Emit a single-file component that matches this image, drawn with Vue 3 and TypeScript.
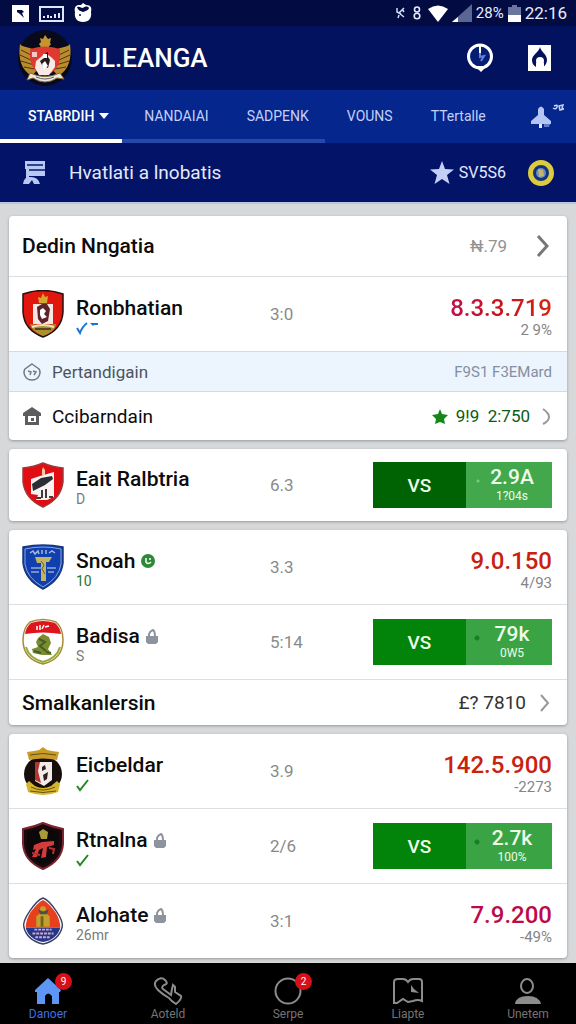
<script setup lang="ts">
interface Team {
  crest: string
  name: string
  mark?: 'live' | 'lock'
  sub: string
  subKind?: 'blue' | 'green' | 'tick' | 'grey'
  odds: string
  amount?: string
  tone?: 'red' | 'pink' | 'mixed'
  change?: string
  bet?: { value: string; note: string; dark?: boolean }
}

interface Group {
  heading?: { title: string; value: string }
  teams: Team[]
  info?: boolean
  footer?: { title: string; value: string }
}

const groups: Group[] = [
  {
    heading: { title: 'Dedin Nngatia', value: '₦.79' },
    teams: [
      { crest: 'ron', name: 'Ronbhatian', sub: '', subKind: 'blue', odds: '3:0', amount: '8.3.3.719', tone: 'mixed', change: '2 9%' },
    ],
    info: true,
  },
  {
    teams: [
      { crest: 'eaint', name: 'Eait Ralbtria', sub: 'D', subKind: 'grey', odds: '6.3', bet: { value: '2.9A', note: '1?04s', dark: true } },
    ],
  },
  {
    teams: [
      { crest: 'snoah', name: 'Snoah', mark: 'live', sub: '10', subKind: 'green', odds: '3.3', amount: '9.0.150', tone: 'red', change: '4/93' },
      { crest: 'badisa', name: 'Badisa', mark: 'lock', sub: 'S', subKind: 'grey', odds: '5:14', bet: { value: '79k', note: '0W5' } },
    ],
    footer: { title: 'Smalkanlersin', value: '£? 7810' },
  },
  {
    teams: [
      { crest: 'eic', name: 'Eicbeldar', sub: '', subKind: 'tick', odds: '3.9', amount: '142.5.900', tone: 'red', change: '-2273' },
      { crest: 'rtn', name: 'Rtnalna', mark: 'lock', sub: '', subKind: 'tick', odds: '2/6', bet: { value: '2.7k', note: '100%' } },
      { crest: 'alo', name: 'Alohate', mark: 'lock', sub: '26mr', subKind: 'grey', odds: '3:1', amount: '7.9.200', tone: 'pink', change: '-49%' },
    ],
  },
]

const navItems = [
  { id: 'home', label: 'Danoer', badge: '9', active: true },
  { id: 'call', label: 'Aoteld' },
  { id: 'ring', label: 'Serpe', badge: '2' },
  { id: 'map', label: 'Liapte' },
  { id: 'user', label: 'Unetem' },
]
</script>

<template>
  <div class="app">
    <div class="status">
      <div class="status-left">
        <svg width="17" height="17" viewBox="0 0 17 17"><rect width="17" height="17" fill="#fff" /><path d="M5 5h5l2 2-2 1 2 5-4-4-3-2z" fill="#020b42" /></svg>
        <svg width="25" height="17" viewBox="0 0 25 17"><rect x="1" y="2" width="23" height="14" fill="none" stroke="#dfe6ff" stroke-width="2" /><path d="M5 13v-2M9 13v-3M12 13v-2M16 13V9M20 13V8" stroke="#dfe6ff" stroke-width="2" /></svg>
        <svg width="18" height="20" viewBox="0 0 18 20"><path d="M4 2h3l2-2 3 2c5 0 6 3 5 7 1 6-2 10-8 10S0 15 1 9C0 6 1 3 4 2z" fill="#fff" /><path d="M3 4c3-1 4 1 6 1 2-2 5-2 6 0-1 3-4 3-6 4-2-1-5-1-6-5z" fill="#020b42" /><circle cx="6" cy="12" r="1" fill="#020b42" /></svg>
      </div>
      <div class="status-right">
        <svg width="9" height="14" viewBox="0 0 9 14"><path d="M1 2v4l4 2M8 2L3 7l5 4M2 12l1-3M6 3l2 3" fill="none" stroke="#d5dcf8" stroke-width="1.500" /></svg>
        <svg class="bt" width="8" height="16" viewBox="0 0 8 16"><circle cx="4" cy="4.500" r="2.500" fill="none" stroke="#e4e8fa" stroke-width="1.600" /><circle cx="4" cy="11" r="2.800" fill="none" stroke="#e4e8fa" stroke-width="1.600" /></svg>
        <svg width="20" height="17" viewBox="0 0 20 17"><path d="M0 4Q10-3 20 4L10 17z" fill="#fff" /></svg>
        <svg width="20" height="18" viewBox="0 0 20 18"><path d="M0 18L20 0v18z" fill="#5a6694" /><path d="M0 18l6-5v5z" fill="#fff" /></svg>
        <span class="pct">28%</span>
        <svg width="13" height="17" viewBox="0 0 13 17"><path d="M4 0h5v2h4v15H0V2h4z" fill="#6b769e" /><path d="M0 10h13v7H0z" fill="#fff" /></svg>
        <span class="clock">22:16</span>
      </div>
    </div>

    <header class="header">
      <svg class="emblem" width="54" height="56" viewBox="0 0 54 56">
        <ellipse cx="27" cy="28" rx="27" ry="28" fill="#080a1c" />
        <path d="M16 20C10 16 5 18 2 14c-2 14 1 26 12 32l6-7zM38 20c6-4 11-2 14-6 2 14-1 26-12 32l-6-7z" fill="#b98d2e" />
        <path d="M3 20l12 6M2 25l13 6M3 31l13 4M6 37l11 2M51 20l-12 6M52 25l-13 6M51 31l-13 4M48 37l-11 2" stroke="#4e3410" stroke-width="1" />
        <path d="M24 19l-3-5 2-2-1-4 3 1 2-4 3 4 3-1-1 5 1 1-4 5z" fill="#c5942c" />
        <path d="M12 19q15-5 30 0v10q-2 13-15 17-13-4-15-17z" fill="#e03a30" />
        <path d="M14 22h5v5h-5z" fill="#f4c9c4" />
        <path d="M18 31l5-4 4-4 6 4 4 4v6l-6 8H21l-4-7z" fill="#f7e9e4" />
        <path d="M22 31l4-3v-4l4-2v5l2 3-2 8-6-3z" fill="#251a1c" /><path d="M25 24h4v4h-4zM24 34l3-3 3 5-4 3z" fill="#fff" />
        <path d="M12 43q15 7 30 0l4 6-7-1q-12 8-24 0l-6 2z" fill="#e9e6e2" stroke="#866a35" stroke-width="1" />
        <path d="M18 47q9 4 18 0" stroke="#666" stroke-width="1" fill="none" />
      </svg>
      <h1>UL.EANGA</h1>
      <button class="icon-btn" aria-label="Riwayat">
        <svg width="28" height="30" viewBox="0 0 28 30"><circle cx="14" cy="13.500" r="11.500" fill="#061d75" stroke="#fff" stroke-width="3" /><path d="M14 3v8" stroke="#fff" stroke-width="2" /><path d="M14 10v4l4-1-3 5" fill="none" stroke="#5f83d8" stroke-width="2" /><path d="M9 23h12l-6 6z" fill="#fff" /></svg>
      </button>
      <button class="icon-btn" aria-label="Promo">
        <svg width="23" height="26" viewBox="0 0 23 26"><rect width="23" height="26" fill="#fff" /><path d="M12 2c1 5 7 7 7 13 0 3-2 6-4 7H8c-3-2-4-4-4-7 0-5 7-8 8-13z" fill="#04115a" /><circle cx="12" cy="16" r="4" fill="#fff" /><path d="M8 18h8v4H8z" fill="#fff" /></svg>
      </button>
    </header>

    <nav class="tabs" aria-label="Kategori">
      <button class="tab active">STABRDIH<svg width="10" height="6" viewBox="0 0 10 6"><path d="M0 0h10L5 6z" fill="#fff" /></svg></button>
      <button class="tab lined">NANDAIAI</button>
      <button class="tab lined">SADPENK</button>
      <button class="tab">VOUNS</button>
      <button class="tab">TTertalle</button>
      <button class="bell" aria-label="Notifikasi">
        <svg width="34" height="26" viewBox="0 0 34 26"><path d="M8 5q3-5 6 0v6l7 6v3H1v-3l7-6z" fill="#b4c4f3" /><path d="M9 20h3v4H9z" fill="#dfe6ff" /><path d="M14 20h6l-1 3h-5z" fill="#5f7cc8" /><path d="M24 2q4-2 3 1t-4 1M29 2l4-1-1 3 2 1-4 1z" fill="none" stroke="#c5d1f7" stroke-width="1.500" /></svg>
      </button>
    </nav>

    <div class="subbar">
      <svg class="flag" width="23" height="24" viewBox="0 0 23 24"><path d="M2 0h20v15H6v3H3V8H2z" fill="#b9c7f3" /><path d="M4 4h16M6 9h16" stroke="#04176b" stroke-width="1.500" /><path d="M0 23q1-7 6-7 9-1 11 7h-6l-2-4-3 4z" fill="#b9c7f3" /></svg>
      <span class="sub-title">Hvatlati a lnobatis</span>
      <svg class="star" width="24" height="23" viewBox="0 0 24 23"><path d="M12 0l3 8 9 .500-7 5.500 2.500 9L12 18l-7.500 5L7 14 0 8.500 9 8z" fill="#c4cff5" /></svg>
      <span class="points">SV5S6</span>
      <svg width="28" height="28" viewBox="0 0 28 28"><circle cx="14" cy="14" r="10.500" fill="#14307f" stroke="#dccb3c" stroke-width="5" /><circle cx="14" cy="14" r="5" fill="#6b8bc8" /><path d="M11 10l5 1 1 6-5 1z" fill="#c0b768" /></svg>
    </div>

    <main class="content">
      <section v-for="(group, gi) in groups" :key="gi" class="card" :class="{ solo: !group.info && group.teams.length === 1 }">
        <a v-if="group.heading" href="#" class="heading">
          <span class="heading-title">{{ group.heading.title }}</span>
          <span class="heading-value">{{ group.heading.value }}</span>
          <svg width="14" height="22" viewBox="0 0 14 22"><path d="M2 1l9 10-9 10" fill="none" stroke="#777" stroke-width="3" /></svg>
        </a>

        <article v-for="team in group.teams" :key="team.name" class="team">
          <svg v-if="team.crest === 'ron'" class="crest" viewBox="0 0 42 48">
            <path d="M1 4Q21-3 41 4v18Q40 40 21 47 2 40 1 22z" fill="#e1160d" stroke="#201210" stroke-width="1.500" />
            <path d="M11 14h20v20H11z" fill="#f6e7e2" /><path d="M15 17l5-3h5l3 5-2 12-6 3-4-5z" fill="#5d2328" /><path d="M18 20l3-2 3 3-2 3 3 3-5 2-2-4z" fill="#fff" />
            <path d="M17 13l-1-6 3 1 2-5 2 4 3-1-1 7z" fill="#d4a630" />
            <path d="M9 37l-1-3 8 1h9l9-1-1 4q-5 6-12 8-8-3-12-9z" fill="#a99131" /><path d="M10 37q11-4 22 0" fill="none" stroke="#efe2c0" stroke-width="2" /><path d="M13 39h16" stroke="#3c2c12" stroke-width="1.500" />
          </svg>
          <svg v-else-if="team.crest === 'eaint'" class="crest" viewBox="0 0 42 46">
            <path d="M1 6Q12 5 21 1q9 4 20 5v14Q39 37 21 45 3 37 1 20z" fill="#e20d12" stroke="#9c3a3a" stroke-width="1.500" />
            <path d="M9 17l9-3 14-4v25l-7 3H14l2-5-7-1z" fill="#f8f2f0" /><path d="M10 22l9-6 11-2 1 3-8 6-12 6z" fill="#282e34" /><path d="M21 5l2 3v5h-3V8z" fill="#f4c8a4" /><path d="M20 28v8M24 27v9M14 36h5M27 35h4" stroke="#443a3c" stroke-width="2" />
          </svg>
          <svg v-else-if="team.crest === 'snoah'" class="crest" viewBox="0 0 42 46">
            <path d="M1 3Q21-1 41 3v16Q39 36 21 45 3 36 1 19z" fill="#113fae" stroke="#19377e" stroke-width="1.500" /><path d="M3 5q18-4 36 0v15Q37 34 21 43 5 34 3 20z" fill="none" stroke="#87a6dc" stroke-width="1" />
            <path d="M8 9l3-2 2 3 3-3 1 3M20 6v4M24 6v4M27 9l3-2 3 2" stroke="#9fb9df" stroke-width="1.500" fill="none" />
            <path d="M13 13h17l-3 5h-3v19h-5V19h-4z" fill="#c2b465" /><path d="M9 24h10M25 24h9M9 28h8M26 28h6" stroke="#90aacf" stroke-width="1.500" /><path d="M19 17l3 4-2 4 3 5" stroke="#655f37" fill="none" />
          </svg>
          <svg v-else-if="team.crest === 'badisa'" class="crest" viewBox="0 0 42 46">
            <path d="M8 3Q21-2 34 3q7 6 7 18 0 19-20 24Q1 40 1 21 1 9 8 3z" fill="#fff" stroke="#a68d35" stroke-width="1.500" /><path d="M9 4q12-4 24 0 5 4 6 11-18-3-36 0 1-7 6-11z" fill="#dd161e" />
            <path d="M4 28q3 11 17 15 14-4 17-15" fill="none" stroke="#94aa36" stroke-width="2" /><path d="M15 7v4M18 6v5M22 6l-2 4M23 8l4-1" stroke="#fff" stroke-width="1.500" />
            <path d="M16 19l5-4 6 3 2 6-3 6 4 6H20l-9-2-1-4 6-2-2-5z" fill="#7c8b2f" /><path d="M17 20l6 3-5 4 6 5M12 32l7 2M24 33l5 1" stroke="#425f25" stroke-width="2" fill="none" />
          </svg>
          <svg v-else-if="team.crest === 'eic'" class="crest" viewBox="0 0 42 48">
            <ellipse cx="21" cy="27" rx="19" ry="18" fill="#170e0b" />
            <path d="M5 5l7-1 5-1 4-3 4 3 5 1 7 1-2 8q-14-3-28 0z" fill="#c99b27" /><path d="M8 8q13-3 26 0" stroke="#665018" fill="none" />
            <path d="M13 15h17v18l-8 6-9-5z" fill="#f4ebe8" /><path d="M13 15h5l-2 9 3 12-6-3z" fill="#b1372f" /><path d="M20 20l3-2 1 4-4 2zM21 28l5-3-1 7-3 2z" fill="#2b2020" />
            <path d="M4 37l3-3 6 5q8 4 16 0l6-5 3 3-2 8q-15 6-30 0z" fill="#d5b52b" /><path d="M9 40q12 6 24 0M8 44q13 3 26 0" stroke="#68500d" fill="none" />
          </svg>
          <svg v-else-if="team.crest === 'rtn'" class="crest" viewBox="0 0 42 48">
            <path d="M1 7Q12 5 21 1q9 4 20 6v15Q40 39 21 47 2 39 1 22z" fill="#1b0a0d" stroke="#7a2630" stroke-width="2" /><path d="M5 10q16-6 32 0v12q-2 15-16 21Q7 37 5 22z" fill="#0c0809" />
            <path d="M17 10l4-3 5 3-1 7h-6z" fill="#a99b38" /><path d="M12 23l8-3 12-1v4l-7 2-1 10-5 1 2-10-4 2-2 7h-5l4-8-3 1z" fill="#d43c3c" /><path d="M27 26l5 1-1 5M10 31l8 2" stroke="#bd2c33" stroke-width="2" fill="none" />
          </svg>
          <svg v-else class="crest" viewBox="0 0 42 50">
            <path d="M21 1q6 2 14 14 7 10 6 16-3 14-20 18Q4 45 1 31 0 25 7 15 15 3 21 1z" fill="#fff" stroke="#3f4266" stroke-width="1.500" /><path d="M21 3q6 3 13 13 5 8 5 16H3q0-8 5-16Q15 6 21 3z" fill="#e7401c" /><path d="M3 32h36q-3 12-18 15Q6 44 3 32z" fill="#25378a" />
            <path d="M14 31V20l4-3v-6l3-2 3 2v6l4 3v11z" fill="#c3a02c" /><path d="M16 13l5 2 6-2-2 5h-7z" fill="#4c5145" /><path d="M20 20v11" stroke="#71641f" stroke-width="3" />
            <path d="M12 34h18M10 38h22M13 42h16" stroke="#d1a9c7" stroke-width="2" stroke-dasharray="3 1" />
          </svg>

          <div class="who">
            <h3>{{ team.name }}
              <svg v-if="team.mark === 'live'" width="14" height="14" viewBox="0 0 14 14"><circle cx="7" cy="7" r="7" fill="#2c8a35" /><path d="M5 4v4q2 3 5 0M9 4v2" fill="none" stroke="#fff" stroke-width="1.500" /></svg>
              <svg v-else-if="team.mark === 'lock'" width="12" height="15" viewBox="0 0 12 15"><path d="M3 8V5q1-3 4-4 2 1 2 7" fill="none" stroke="#8d949e" stroke-width="2" /><path d="M0 7h12v6l-2 2H2l-2-2z" fill="#8d949e" /></svg>
            </h3>
            <p v-if="team.sub" class="sub" :class="team.subKind">{{ team.sub }}</p>
            <p v-else class="sub">
              <svg v-if="team.subKind === 'blue'" width="24" height="13" viewBox="0 0 24 13"><path d="M1 6l3 5Q6 5 11 1" fill="none" stroke="#1976d8" stroke-width="2" /><path d="M14 1h8v2h-4l-1 1z" fill="#1976d8" /></svg>
              <svg v-else width="13" height="13" viewBox="0 0 13 13"><path d="M1 7l3 4L12 1" fill="none" stroke="#21891e" stroke-width="2" /></svg>
            </p>
          </div>
          <span class="odds">{{ team.odds }}</span>
          <button v-if="team.bet" class="bet" :class="{ dark: team.bet.dark }">
            <span class="vs">VS</span>
            <span class="price"><strong>{{ team.bet.value }}</strong><small>{{ team.bet.note }}</small></span>
          </button>
          <div v-else class="result">
            <strong :class="team.tone">{{ team.amount }}</strong>
            <span>{{ team.change }}</span>
          </div>
        </article>

        <template v-if="group.info">
          <div class="info">
            <svg width="18" height="18" viewBox="0 0 18 18"><path d="M9 1l7 5q2 3 0 7-2 4-7 4t-7-4q-2-4 0-7z" fill="none" stroke="#6f7c88" stroke-width="1.500" /><path d="M5 8l3 1-1 3M10 8l3 1-2 3" fill="none" stroke="#6f7c88" stroke-width="1.500" /></svg>
            <span>Pertandigain</span>
            <span class="info-value">F9S1 F3EMard</span>
          </div>
          <a href="#" class="linkrow">
            <svg width="18" height="18" viewBox="0 0 18 18"><path d="M9 0l9 6v3h-2v9H2V9H0V6z" fill="#5b5d61" /><path d="M5 9h8v6H5z" fill="#fff" /><path d="M8 11h3v3H8z" fill="#5b5d61" /></svg>
            <span class="link-title">Ccibarndain</span>
            <svg class="green-star" width="16" height="15" viewBox="0 0 16 15"><path d="M8 0l2 5 6 1-4 4 1 5-5-2-5 2 1-5-4-4 6-1z" fill="#15861a" /></svg>
            <span class="link-value">9!9&nbsp; 2:750</span>
            <svg width="9" height="17" viewBox="0 0 9 17"><path d="M1 1q6 4 6 8t-6 7" fill="none" stroke="#999" stroke-width="2" /></svg>
          </a>
        </template>

        <a v-if="group.footer" href="#" class="footer">
          <span class="heading-title">{{ group.footer.title }}</span>
          <span class="footer-value">{{ group.footer.value }}</span>
          <svg width="10" height="18" viewBox="0 0 10 18"><path d="M1 1l7 8-7 8" fill="none" stroke="#999" stroke-width="2" /></svg>
        </a>
      </section>
    </main>

    <nav class="bottom" aria-label="Utama">
      <a v-for="item in navItems" :key="item.id" href="#" class="nav-item" :class="{ on: item.active }">
        <span class="nav-icon">
          <svg v-if="item.id === 'home'" width="28" height="28" viewBox="0 0 28 28"><path d="M14 1l13 12-1 2h-1v12h-7v-8q-4-5-7 0v8H3V15H1v-2z" fill="#5e96f5" /></svg>
          <svg v-else-if="item.id === 'call'" width="30" height="28" viewBox="0 0 30 28"><path d="M5 13Q0 8 3 4q5-5 9-1 4 4-1 5-3 2-1 4l8 6 1-6 1-4 2 2v5l6 4q1 3-5 8-5-3-7-6Q9 17 5 13z" fill="none" stroke="#8c8c8c" stroke-width="2" /></svg>
          <svg v-else-if="item.id === 'ring'" width="28" height="28" viewBox="0 0 28 28"><circle cx="14" cy="14" r="12.500" fill="none" stroke="#8c8c8c" stroke-width="2" /></svg>
          <svg v-else-if="item.id === 'map'" width="32" height="28" viewBox="0 0 32 28"><path d="M2 26V5q0-3 4-3h5q3 0 5 3 2-3 5-3h6q3 0 3 3v19q-4-2-9 0l-5 1-5-3-6 4z" fill="none" stroke="#8c8c8c" stroke-width="2" /><path d="M19 8l3 4 5 4-8-1z" fill="#8c8c8c" /></svg>
          <svg v-else width="26" height="28" viewBox="0 0 26 28"><ellipse cx="12" cy="9" rx="6" ry="7" fill="none" stroke="#8c8c8c" stroke-width="2" /><path d="M0 27q1-8 13-8 11 0 13 8z" fill="#8c8c8c" /></svg>
          <span v-if="item.badge" class="badge">{{ item.badge }}</span>
        </span>
        <span class="nav-label">{{ item.label }}</span>
      </a>
    </nav>
  </div>
</template>

<style>
body {
  margin: 0;
  background: #d7d8da;
}
</style>

<style scoped>
.app {
  display: flex;
  flex-direction: column;
  min-height: 100vh;
  font-family: Roboto, "Liberation Sans", sans-serif;
  color: #0c0c0c;
}
svg {
  display: block;
  flex: none;
}
button {
  border: 0;
  padding: 0;
  margin: 0;
  background: none;
  font: inherit;
  color: inherit;
  cursor: pointer;
}
a {
  color: inherit;
  text-decoration: none;
}
h1, h3, p {
  margin: 0;
}

.status {
  display: flex;
  align-items: center;
  justify-content: space-between;
  height: 26px;
  padding: 0 9px 0 12px;
  background: #020b42;
  color: #e9edfb;
}
.status-left {
  display: flex;
  align-items: center;
  gap: 10px;
}
.status-right {
  display: flex;
  align-items: center;
  gap: 4px;
}
.bt {
  margin: 0 3px 0 4px;
}
.pct {
  font-size: 15px;
}
.clock {
  font-size: 17px;
}

.header {
  display: flex;
  align-items: center;
  height: 64px;
  padding: 0 25px 0 18px;
  background: #03125f;
  color: #fff;
}
.header h1 {
  flex: 1;
  margin-left: 12px;
  font-size: 26px;
  font-weight: 500;
  line-height: 32px;
}
.icon-btn + .icon-btn {
  margin-left: 34px;
}

.tabs {
  display: flex;
  height: 53px;
  background: #05268d;
}
.tab {
  display: flex;
  align-items: center;
  gap: 5px;
  padding: 3px 16px 0 22px;
  border-bottom: 4px solid transparent;
  font-size: 14px;
  color: #c3d1fa;
}
.tab.active {
  padding: 3px 13px 0 28px;
  border-bottom-color: #fff;
  font-weight: 500;
  color: #fff;
}
.tab.lined {
  border-bottom-color: #2449a8;
}
.bell {
  margin-left: auto;
  margin-right: 12px;
}

.subbar {
  display: flex;
  align-items: center;
  height: 59px;
  padding: 0 21px 0 23px;
  border-bottom: 2px solid #b9c3e2;
  background: #031468;
  color: #e3e9fb;
}
.sub-title {
  flex: 1;
  margin-left: 23px;
  font-size: 19px;
}
.points {
  margin: 0 21px 0 5px;
  font-size: 16px;
}

.content {
  display: flex;
  flex-direction: column;
  gap: 9px;
  flex: 1;
  padding: 12px 9px 5px;
}
.card {
  overflow: hidden;
  border-radius: 4px;
  background: #fff;
  box-shadow: 0 1px 3px rgba(0, 0, 0, 0.3);
}
.heading {
  display: flex;
  align-items: center;
  height: 60px;
  padding: 0 17px 0 13px;
  border-bottom: 1px solid #dedfe1;
}
.heading-title {
  flex: 1;
  font-size: 21px;
  font-weight: 500;
}
.heading-value {
  margin-right: 29px;
  font-size: 17px;
  color: #929292;
}
.team {
  display: grid;
  grid-template-columns: 42px minmax(0, 2fr) minmax(0, 1fr) 179px;
  column-gap: 12px;
  align-items: center;
  height: 74px;
  padding: 0 15px 0 13px;
}
.solo .team {
  height: 72px;
}
.team + .team,
.footer {
  border-top: 1px solid #dedfe1;
}
.crest {
  width: 42px;
  height: 48px;
}
.who {
  padding-top: 4px;
}
.who h3 {
  display: flex;
  align-items: center;
  gap: 6px;
  font-size: 21px;
  font-weight: 500;
  line-height: 24px;
}
.sub {
  display: flex;
  align-items: center;
  height: 16px;
  font-size: 14px;
  color: #7b7b7b;
}
.sub.green {
  color: #26752a;
}
.odds {
  font-size: 17px;
  color: #8a8a8a;
}
.result {
  display: flex;
  flex-direction: column;
  align-items: flex-end;
  padding-top: 4px;
}
.result strong {
  font-size: 24px;
  font-weight: 500;
  line-height: 28px;
}
.result span {
  font-size: 15px;
  line-height: 16px;
  color: #858585;
}
.red {
  color: #c9210f;
}
.pink {
  color: #bd0a4b;
}
.mixed {
  background: linear-gradient(90deg, #c0104a, #c41220 45%, #d8250f);
  background-clip: text;
  color: transparent;
}
.bet {
  display: grid;
  grid-template-columns: 93px 1fr;
  height: 46px;
  color: #eefbe9;
}
.vs {
  display: grid;
  place-items: center;
  background: #028309;
  font-size: 19px;
  font-weight: 500;
}
.bet.dark .vs {
  background: #006303;
}
.price {
  display: flex;
  flex-direction: column;
  align-items: center;
  justify-content: center;
  padding-left: 6px;
  background: radial-gradient(circle at 11px 19px, #1c7d28 2px, transparent 3px) #3aa444;
}
.dark .price {
  background: radial-gradient(circle at 12px 19px, #7cc983 1px, transparent 2px) #42a84b;
}
.price strong {
  font-size: 21px;
  font-weight: 500;
  line-height: 22px;
}
.price small {
  font-size: 12px;
  line-height: 16px;
}
.info {
  display: flex;
  align-items: center;
  gap: 11px;
  height: 39px;
  padding: 0 15px 0 14px;
  border-top: 1px solid #d3dae2;
  border-bottom: 1px solid #d3dae2;
  background: #ecf4fd;
  font-size: 17px;
  color: #4a545e;
}
.info-value {
  margin-left: auto;
  font-size: 15px;
  color: #8390a0;
}
.linkrow {
  display: flex;
  align-items: center;
  height: 48px;
  padding: 0 16px 0 14px;
}
.link-title {
  flex: 1;
  margin-left: 11px;
  font-size: 19px;
}
.link-value {
  margin: 0 12px 0 8px;
  font-size: 17px;
  color: #0b5c10;
}
.footer {
  display: flex;
  align-items: center;
  height: 45px;
  padding: 0 17px 0 13px;
}
.footer-value {
  margin-right: 14px;
  font-size: 19px;
  color: #333;
}

.bottom {
  position: sticky;
  bottom: 0;
  display: flex;
  justify-content: space-between;
  height: 61px;
  padding: 0 18px;
  background: #000;
}
.nav-item {
  display: flex;
  flex-direction: column;
  align-items: center;
  width: 60px;
  padding-top: 14px;
  color: #757575;
}
.nav-icon {
  position: relative;
}
.nav-label {
  margin-top: 2px;
  font-size: 12px;
  line-height: 14px;
}
.on {
  color: #3f6fe0;
}
.badge {
  position: absolute;
  top: -4px;
  right: -10px;
  width: 17px;
  height: 17px;
  border-radius: 50%;
  background: #d80f16;
  font-size: 10px;
  line-height: 17px;
  text-align: center;
  color: #fff;
}
</style>
